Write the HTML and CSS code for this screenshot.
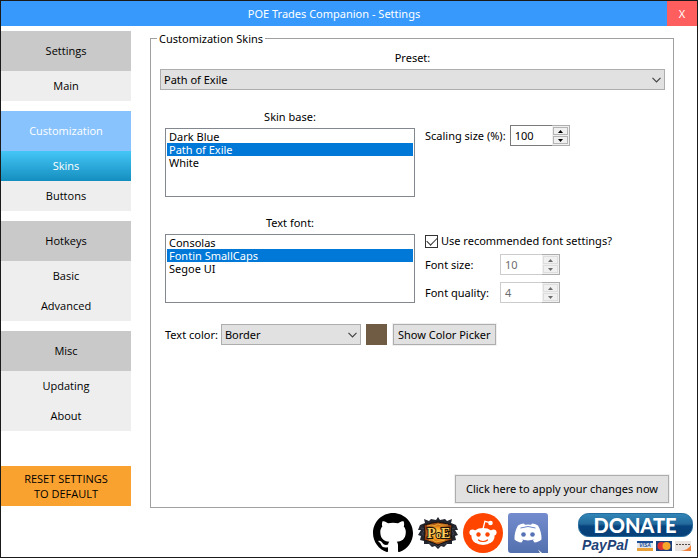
FILE: index.html
```html
<!DOCTYPE html>
<html lang="en">
<head>
<meta charset="utf-8">
<title>POE Trades Companion - Settings</title>
<link rel="stylesheet" href="styles.css">
</head>
<body>
<header class="titlebar">
  <h1 class="title">POE Trades Companion - Settings</h1>
  <button class="close" type="button">X</button>
</header>
<div class="window">
  <nav class="sidebar">
    <section class="group">
      <a class="tab head" href="#">Settings</a>
      <a class="tab" href="#">Main</a>
    </section>
    <section class="group">
      <a class="tab head open" href="#">Customization</a>
      <a class="tab current" href="#">Skins</a>
      <a class="tab" href="#">Buttons</a>
    </section>
    <section class="group">
      <a class="tab head" href="#">Hotkeys</a>
      <a class="tab" href="#">Basic</a>
      <a class="tab" href="#">Advanced</a>
    </section>
    <section class="group">
      <a class="tab head" href="#">Misc</a>
      <a class="tab" href="#">Updating</a>
      <a class="tab" href="#">About</a>
    </section>
    <button class="reset" type="button">RESET SETTINGS<br>TO DEFAULT</button>
  </nav>
  <main class="content">
    <fieldset class="panel">
      <legend>Customization Skins</legend>
      <div class="form">
        <div class="field preset">
          <label class="caption" for="preset">Preset:</label>
          <span class="drop">
            <select id="preset"><option>Path of Exile</option></select>
            <svg class="chevron" viewBox="0 0 9 6"><path d="M.5.8 4.5 4.8 8.5.8"/></svg>
          </span>
        </div>
        <div class="columns">
          <div class="field">
            <label class="caption" for="base">Skin base:</label>
            <select class="list" id="base" size="5">
              <option>Dark Blue</option><option selected>Path of Exile</option><option>White</option>
            </select>
          </div>
          <div class="side">
            <div class="setting">
              <label for="scale">Scaling size (%):</label>
              <span class="spinner">
                <input id="scale" type="number" value="100">
                <span class="steps">
                  <button type="button" aria-label="Increase"><svg viewBox="0 0 5 3"><path d="M0 3 2.500 0 5 3z"/></svg></button>
                  <button type="button" aria-label="Decrease"><svg viewBox="0 0 5 3"><path d="M0 0H5L2.500 3z"/></svg></button>
                </span>
              </span>
            </div>
          </div>
          <div class="field">
            <label class="caption" for="font">Text font:</label>
            <select class="list" id="font" size="5">
              <option>Consolas</option><option selected>Fontin SmallCaps</option><option>Segoe UI</option>
            </select>
          </div>
          <div class="side">
            <div class="check">
              <input id="recommended" type="checkbox" checked>
              <label for="recommended">Use recommended font settings?</label>
            </div>
            <div class="setting aligned">
              <label for="size">Font size:</label>
              <span class="spinner">
                <input id="size" type="number" value="10" disabled>
                <span class="steps">
                  <button type="button" aria-label="Increase" disabled><svg viewBox="0 0 5 3"><path d="M0 3 2.500 0 5 3z"/></svg></button>
                  <button type="button" aria-label="Decrease" disabled><svg viewBox="0 0 5 3"><path d="M0 0H5L2.500 3z"/></svg></button>
                </span>
              </span>
            </div>
            <div class="setting aligned">
              <label for="quality">Font quality:</label>
              <span class="spinner">
                <input id="quality" type="number" value="4" disabled>
                <span class="steps">
                  <button type="button" aria-label="Increase" disabled><svg viewBox="0 0 5 3"><path d="M0 3 2.500 0 5 3z"/></svg></button>
                  <button type="button" aria-label="Decrease" disabled><svg viewBox="0 0 5 3"><path d="M0 0H5L2.500 3z"/></svg></button>
                </span>
              </span>
            </div>
          </div>
        </div>
        <div class="color-row">
          <div class="color-field">
            <label for="color">Text color:</label>
            <span class="drop color-drop">
              <select id="color"><option>Border</option></select>
              <svg class="chevron" viewBox="0 0 9 6"><path d="M.5.8 4.5 4.8 8.5.8"/></svg>
            </span>
          </div>
          <span class="swatch"></span>
          <button class="push" type="button">Show Color Picker</button>
        </div>
        <button class="push apply" type="button">Click here to apply your changes now</button>
      </div>
    </fieldset>
  </main>
</div>
<footer class="links">
  <a href="#" aria-label="GitHub">
    <svg width="40" height="40" viewBox="0 0 16 16"><path d="M8 0C3.580 0 0 3.580 0 8c0 3.540 2.290 6.530 5.470 7.590.4.070.55-.17.55-.38 0-.19-.01-.82-.01-1.490-2.010.37-2.530-.49-2.690-.94-.09-.23-.48-.94-.82-1.130-.28-.15-.68-.52-.01-.53.63-.01 1.080.58 1.230.82.72 1.210 1.870.87 2.330.66.070-.52.28-.87.51-1.070-1.780-.2-3.640-.89-3.640-3.950 0-.87.31-1.590.82-2.150-.08-.2-.36-1.020.08-2.120 0 0 .67-.21 2.200.82a7.600 7.600 0 0 1 4 0c1.530-1.040 2.200-.82 2.200-.82.44 1.100.16 1.920.08 2.120.51.56.82 1.270.82 2.150 0 3.070-1.870 3.750-3.650 3.950.29.25.54.73.54 1.480 0 1.070-.01 1.930-.01 2.200 0 .21.15.46.55.38A8 8 0 0 0 16 8c0-4.420-3.580-8-8-8z"/></svg>
  </a>
  <a href="#" aria-label="Path of Exile">
    <svg width="40" height="40" viewBox="0 0 40 40">
      <defs><radialGradient id="fire"><stop offset="0" stop-color="#ffe36a"/><stop offset=".5" stop-color="#f79a1d"/><stop offset="1" stop-color="#8a3810"/></radialGradient></defs>
      <path fill="#23262f" d="M20 4l2 3 5-1 2 2 5-2-1 4 5 2 2 5-3 0 3 5-3 1 1 4-4 1 0 3-5 0-3 3-3-1-3 3-3-3-3 1-3-3-5 0 0-3-4-1 1-4-3-1 3-5-3 0 2-5 5-2-1-4 5 2 2-2 5 1z"/>
      <path fill="none" stroke="#4a4e5c" stroke-width=".7" d="M3 15l4 1-3 5 3 2-1 4 4 1 2 3 5 0 3 3 3-3 5 0 2-3 4-1-1-4 3-2-3-5 4-1"/>
      <path fill="url(#fire)" stroke="#16110f" d="M6 12l8-2 6-1 6 1 8 2-1 8 1 7-7 2-7 3-7-3-7-2 1-7z"/>
      <path fill="none" stroke="#ffcd4b" stroke-width=".7" d="M9 13l5-1 2 1 4-2 3 1 7 0M11 27l4 0 3 2 4-1 5-1"/>
      <g class="poe">
        <text x="9" y="25">P</text>
        <text class="small-o" x="18" y="25">o</text>
        <text x="23" y="25">E</text>
      </g>
    </svg>
  </a>
  <a href="#" aria-label="Reddit">
    <svg width="40" height="40" viewBox="0 0 40 40">
      <circle cx="20" cy="20" r="20" fill="#ff4500"/>
      <g fill="#fff"><circle cx="9.500" cy="19.500" r="3.100"/><circle cx="30.500" cy="19.500" r="3.100"/><ellipse cx="20" cy="23.500" rx="11.500" ry="8.500"/><circle cx="27.500" cy="10" r="2.300"/></g>
      <path d="M20 16l1.900-7.600L27 9.700" fill="none" stroke="#fff" stroke-width="1.300"/>
      <g fill="#ff4500"><circle cx="15.500" cy="21.500" r="2.200"/><circle cx="24.500" cy="21.500" r="2.200"/></g>
      <path d="M15.500 27c2 2 7 2 9 0" fill="none" stroke="#ff4500" stroke-width="1.200" stroke-linecap="round"/>
    </svg>
  </a>
  <a href="#" aria-label="Discord">
    <svg width="40" height="40" viewBox="0 0 40 40">
      <defs><linearGradient id="violet" x2="0" y2="1"><stop stop-color="#748cce"/><stop offset="1" stop-color="#5370ae"/></linearGradient></defs>
      <path fill="url(#violet)" d="M3 0H37a3 3 0 0 1 3 3V40H34L30 36.500 32 40H3a3 3 0 0 1-3-3V3a3 3 0 0 1 3-3z"/>
      <path fill="#fff" d="M10 12.500c2-1.300 4-1.900 6-2l.8 1.200q3.200-.5 6.400 0l.8-1.200c2 .1 4 .7 6 2 2.500 4.500 3.700 8.800 3.500 14-2 1.800-4.300 2.800-7 3l-1.700-2.400 2-1q-6.800 2.600-13.600 0l2 1-1.700 2.400c-2.700-.2-5-1.200-7-3-.2-5.200 1-9.500 3.500-14z"/>
      <g fill="#5572b5"><circle cx="15.500" cy="21.500" r="2.300"/><circle cx="24.500" cy="21.500" r="2.300"/></g>
      <path d="M12.500 15q7.500-3 15 0" fill="none" stroke="#6c86c8"/>
    </svg>
  </a>
  <a class="donate" href="#" aria-label="Donate with PayPal">
    <svg width="116" height="41" viewBox="0 0 116 41">
      <defs><linearGradient id="navy" x2="0" y2="1"><stop stop-color="#3187b8"/><stop offset=".45" stop-color="#246a9c"/><stop offset=".55" stop-color="#07437d"/><stop offset="1" stop-color="#084078"/></linearGradient></defs>
      <rect x="1.500" y=".5" width="114" height="23" rx="10" fill="url(#navy)" stroke="#236b9e"/>
      <text class="donate-text" x="58" y="20" text-anchor="middle">DONATE</text>
      <text class="paypal" x="5" y="37">PayPal</text>
      <path fill="#1c4f94" d="M60 28H76V30H60z"/><path fill="#e3e7ee" d="M60 30H76V35H60z"/><path fill="#e8a13a" d="M60 35H76V38H60z"/>
      <text class="visa" x="68" y="34" text-anchor="middle">VISA</text>
      <rect x="79" y="28" width="16" height="10" fill="#1d3f7c"/><circle cx="84.500" cy="33" r="4" fill="#e03131"/><circle cx="89.500" cy="33" r="4" fill="#f5a62b"/>
      <rect x="98" y="28" width="16" height="10" fill="#e9e4e1"/><path fill="#f0803a" d="M114 32V38H104q7-1 10-6z"/><path stroke="#554b49" stroke-dasharray="2 1" d="M99 31.500H113"/>
    </svg>
  </a>
</footer>
</body>
</html>
```

FILE: styles.css
```css
* { box-sizing: border-box; }
body {
  margin: 0;
  min-height: 100vh;
  display: flex;
  flex-direction: column;
  border: 1px solid #1a1a1a;
  background: #fff;
  color: #000;
  font: 11px/16px "Noto Sans", "Open Sans", sans-serif;
}
button, input, select { font: inherit; color: inherit; margin: 0; }
button { cursor: pointer; }
svg { display: block; }
a { color: inherit; text-decoration: none; }

.titlebar { display: flex; height: 25px; background: #3799fc; color: #fff; }
.title { flex: 1; margin: 0; font-size: 11px; font-weight: 400; line-height: 25px; text-align: center; }
.close { width: 30px; padding: 0; border: 0; background: #ff5e5e; }

.window { flex: 1; display: flex; padding-top: 5px; }
.sidebar { width: 130px; display: flex; flex-direction: column; gap: 10px; font-family: "Open Sans", sans-serif; }
.tab { display: block; background: #eee; line-height: 30px; text-align: center; }
.head { background: #c9c9c9; line-height: 40px; }
.open { background: #88c3fd; color: #fff; }
.current { background: linear-gradient(#44c6f6, #148ebf); color: #fff; }
.reset { height: 40px; margin-top: 25px; padding: 0; border: 0; background: #f9a230; line-height: 15px; }

.content { flex: 1; display: flex; padding: 0 23px 0 19px; }
.panel { flex: 1; min-width: 0; margin: 0; padding: 0; border: 1px solid #a0a0a0; }
.panel legend { margin-left: 6px; padding: 2px 2px 0; line-height: 12px; }
.form { height: 100%; display: flex; flex-direction: column; padding: 5px 3px 3px 9px; }
.field { display: flex; flex-direction: column; gap: 3px; }
.preset { margin-right: 5px; }
.caption { text-align: center; }

.drop { display: grid; align-items: center; height: 21px; }
.drop select, .chevron { grid-area: 1 / 1; }
.drop select { width: 100%; height: 21px; padding: 0 3px; border: 1px solid #adadad; border-radius: 0; background: #e1e1e1; appearance: none; }
.chevron { width: 9px; height: 6px; margin-right: 4px; justify-self: end; fill: none; stroke: #444; stroke-width: 1.2; pointer-events: none; }

.columns { display: grid; grid-template-columns: 250px 1fr; gap: 18px 10px; margin: 19px 0 0 5px; }
.list { height: 69px; padding: 1px; border: 1px solid #828790; border-radius: 0; background: #fff; outline: 0; overflow: hidden; }
.list option { display: flex; align-items: center; height: 13px; min-height: 13px; padding: 0 2px; }
.list option:checked { background: #0078d7 linear-gradient(#0078d7, #0078d7); color: #fff; }

.side { padding-top: 16px; }
.setting { display: flex; align-items: center; gap: 4px; }
.setting + .setting { margin-top: 7px; }
.aligned label { width: 71px; }
.check { display: flex; align-items: center; gap: 3px; height: 20px; margin-bottom: 3px; }
.check input { width: 13px; height: 13px; appearance: none; border: 1px solid #333; display: grid; place-items: center; }
.check input:checked::before { content: ""; width: 9px; height: 5px; margin-bottom: 3px; border: solid #333; border-width: 0 0 1px 1px; transform: rotate(-45deg); }

.spinner { display: flex; width: 60px; height: 21px; border: 1px solid #7a7a7a; }
.spinner input { flex: 1; min-width: 0; padding: 0 4px; border: 0; background: #fff; appearance: textfield; outline: 0; }
.spinner input::-webkit-inner-spin-button { appearance: none; }
.steps { display: grid; grid-template-rows: 1fr 1fr; gap: 1px; width: 18px; margin: -1px; padding: 1px; border: 1px solid #adadad; border-left: 0; background: #f0f0f0; }
.steps button { display: grid; place-items: center; min-height: 0; padding: 0; border: 1px solid #b4b4b4; background: #f0f0f0; }
.steps svg { width: 5px; height: 3px; }
.spinner:has(input:disabled) { border-color: #ccc; color: #6d6d6d; }
.steps button:disabled { border-color: #ddd; fill: #6d6d6d; }

.color-row { display: flex; align-items: center; gap: 5px; margin: 21px 0 0 5px; }
.color-field { display: flex; align-items: center; gap: 3px; }
.color-drop { width: 140px; }
.swatch { width: 21px; height: 21px; background: #705c45; }
.push { height: 21px; padding: 0 4px; border: 1px solid #adadad; outline: 1px solid #f0f0f0; background: #e1e1e1; }
.color-row .push { margin-left: 1px; }
.apply { align-self: flex-end; height: 28px; margin: auto 1px 1px; padding: 0 10px; }

.links { display: flex; justify-content: flex-end; gap: 5px; padding: 5px 4px 3px; }
.donate { margin-left: 24px; }
.poe { font: 700 14px "Liberation Serif", serif; fill: #ffd060; stroke: #1c130a; stroke-width: 2px; paint-order: stroke; }
.small-o { font-size: 10px; }
.donate-text { font: 900 20px Lato, sans-serif; fill: #fff; }
.paypal { font: italic 700 14px "Liberation Sans", sans-serif; fill: #1f4277; }
.visa { font: italic 700 5px "Liberation Sans", sans-serif; fill: #1c4f94; }
```
